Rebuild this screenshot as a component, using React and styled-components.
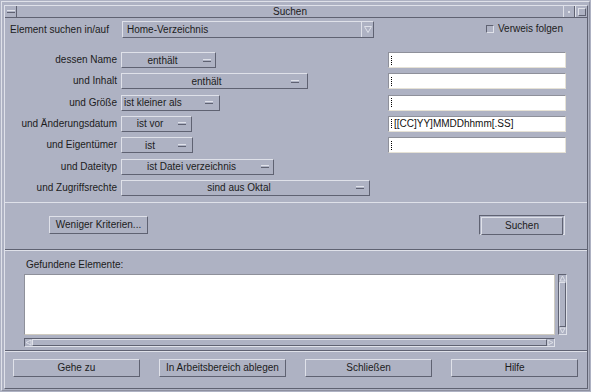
import React from 'react';
import styled, { createGlobalStyle } from 'styled-components';

const BG = '#aeb2c3';
const LIGHT = '#dfe1e9';
const DARK = '#5f6272';

const GlobalStyle = createGlobalStyle`
    body {
        margin: 0;
        overflow: hidden;
        background: ${BG};
        font-family: "Liberation Sans", Arial, sans-serif;
        font-size: 10px;
        color: #1c1c1c;
    }
`;

const Outer = styled.div`
    width: 591px;
    height: 392px;
    box-sizing: border-box;
    padding: 1px;
    background: ${BG};
`;

const Frame = styled.div`
    height: 100%;
    box-sizing: border-box;
    border-top: 1px solid ${LIGHT};
    border-left: 1px solid ${LIGHT};
    border-right: 1px solid #8d90a0;
    border-bottom: 1px solid #8d90a0;
    padding: 3px 1px 1px 2px;
`;

const Win = styled.div`
    height: 100%;
    box-sizing: border-box;
    border-top: 1px solid ${LIGHT};
    border-left: 1px solid ${LIGHT};
    border-right: 1px solid ${DARK};
    border-bottom: 1px solid ${DARK};
    display: flex;
    flex-direction: column;
`;

const TitleBar = styled.div`
    display: flex;
    height: 11px;
    border-bottom: 1px solid ${DARK};
`;

const MenuButton = styled.div`
    width: 11px;
    border-right: 1px solid ${DARK};
    display: flex;
    align-items: center;
    justify-content: center;
    &::after {
        content: '';
        width: 8px;
        height: 1px;
        border-top: 1px solid ${LIGHT};
        border-bottom: 1px solid ${DARK};
    }
`;

const Title = styled.div`
    flex: 1;
    text-align: center;
    line-height: 11px;
`;

const MinButton = styled.div`
    width: 10px;
    border-left: 1px solid ${LIGHT};
    border-right: 1px solid ${DARK};
    display: flex;
    align-items: center;
    justify-content: center;
    &::after {
        content: '';
        width: 2px;
        height: 2px;
        background: ${LIGHT};
    }
`;

const MaxButton = styled.div`
    width: 11px;
    border-left: 1px solid ${LIGHT};
    display: flex;
    align-items: center;
    justify-content: center;
    &::after {
        content: '';
        width: 6px;
        height: 6px;
        border: 1px solid ${LIGHT};
        border-right-color: ${DARK};
        border-bottom-color: ${DARK};
    }
`;

const TopRow = styled.div`
    display: flex;
    align-items: center;
    margin-top: 3px;
    padding-left: 5px;
    height: 17px;
`;

const TopLabel = styled.div`
    width: 112px;
`;

const Combo = styled.div`
    width: 252px;
    height: 17px;
    box-sizing: border-box;
    display: flex;
    border-top: 1px solid ${LIGHT};
    border-left: 1px solid ${LIGHT};
    border-bottom: 1px solid ${DARK};
    border-right: 1px solid ${DARK};
`;

const ComboText = styled.div`
    flex: 1;
    padding-left: 4px;
    line-height: 15px;
`;

const ComboArrow = styled.div`
    width: 11px;
    border-left: 1px solid ${LIGHT};
    display: flex;
    align-items: center;
    justify-content: center;
`;

const CheckWrap = styled.div`
    margin-left: auto;
    margin-right: 24px;
    display: flex;
    align-items: center;
    gap: 4px;
    align-self: flex-start;
    margin-top: 2px;
`;

const CheckBox = styled.div`
    width: 6px;
    height: 6px;
    border-top: 1px solid ${DARK};
    border-left: 1px solid ${DARK};
    border-right: 1px solid ${LIGHT};
    border-bottom: 1px solid ${LIGHT};
`;

const Criteria = styled.div`
    display: grid;
    grid-template-columns: 112px 263px 178px;
    grid-auto-rows: 16px;
    column-gap: 4px;
    row-gap: 5.33px;
    margin-top: 14px;
`;

const CritLabel = styled.div`
    text-align: right;
    line-height: 16px;
    grid-column: 1;
`;

const OptionMenu = styled.div`
    grid-column: 2;
    width: ${p => p.$w}px;
    box-sizing: border-box;
    display: flex;
    align-items: center;
    border-top: 1px solid ${LIGHT};
    border-left: 1px solid ${LIGHT};
    border-bottom: 1px solid ${DARK};
    border-right: 1px solid ${DARK};
    padding-right: ${p => p.$pad}px;
`;

const OptionText = styled.div`
    flex: 1;
    text-align: ${p => p.$align || 'center'};
    padding-left: ${p => p.$left || 0}px;
`;

const Indicator = styled.div`
    width: 8px;
    height: 1px;
    border-top: 1px solid ${LIGHT};
    border-bottom: 1px solid ${DARK};
`;

const TextField = styled.div`
    grid-column: 3;
    background: #fff;
    box-sizing: border-box;
    border-top: 1px solid #8e909a;
    border-left: 1px solid #8e909a;
    border-bottom: 1px solid #e6e2d6;
    border-right: 1px solid #e6e2d6;
    padding-left: 2px;
    display: flex;
    align-items: center;
    color: #111;
`;

const Caret = styled.span`
    display: inline-block;
    width: 0;
    height: 9px;
    border-left: 1px dotted #000;
    margin-right: 2px;
`;

const Separator = styled.div`
    margin-top: ${p => p.$top}px;
    height: 0;
    border-top: 1px solid ${p => (p.$dark ? DARK : LIGHT)};
    border-bottom: ${p => (p.$dark ? `1px solid ${LIGHT}` : 'none')};
`;

const ActionRow = styled.div`
    display: flex;
    align-items: center;
    justify-content: space-between;
    margin-top: 12px;
    height: 20px;
    padding: 0 22px 0 44px;
`;

const Button = styled.div`
    box-sizing: border-box;
    width: ${p => (p.$w ? `${p.$w}px` : 'auto')};
    height: 18px;
    line-height: 16px;
    text-align: center;
    border-top: 1px solid ${LIGHT};
    border-left: 1px solid ${LIGHT};
    border-bottom: 1px solid ${DARK};
    border-right: 1px solid ${DARK};
    white-space: nowrap;
    overflow: hidden;
`;

const DefaultRing = styled.div`
    box-sizing: border-box;
    width: 86px;
    height: 20px;
    padding: 1px;
    border-top: 1px solid ${DARK};
    border-left: 1px solid ${DARK};
    border-bottom: 1px solid ${LIGHT};
    border-right: 1px solid ${LIGHT};
`;

const Results = styled.div`
    padding-left: 19px;
    margin-top: 8px;
`;

const ResultsLabel = styled.div`
    height: 12px;
    line-height: 12px;
    padding-left: 2px;
`;

const ListArea = styled.div`
    display: flex;
    gap: 3px;
    margin-top: 3px;
`;

const ListColumn = styled.div`
    width: 531px;
    display: flex;
    flex-direction: column;
    gap: 3px;
`;

const ListBox = styled.div`
    height: 61px;
    box-sizing: border-box;
    background: #fff;
    border-top: 1px solid #8e909a;
    border-left: 1px solid #8e909a;
    border-bottom: 1px solid #cfcbc0;
    border-right: 1px solid #cfcbc0;
`;

const Scroll = styled.div`
    box-sizing: border-box;
    display: flex;
    flex-direction: ${p => (p.$vertical ? 'column' : 'row')};
    width: ${p => (p.$vertical ? '9px' : '100%')};
    height: ${p => (p.$vertical ? '61px' : '9px')};
    border-top: 1px solid ${DARK};
    border-left: 1px solid ${DARK};
    border-bottom: 1px solid ${LIGHT};
    border-right: 1px solid ${LIGHT};
`;

const ScrollArrow = styled.div`
    width: 7px;
    height: 7px;
    display: flex;
    align-items: center;
    justify-content: center;
`;

const ScrollThumb = styled.div`
    flex: 1;
    box-sizing: border-box;
    border-top: 1px solid ${LIGHT};
    border-left: 1px solid ${LIGHT};
    border-bottom: 1px solid ${DARK};
    border-right: 1px solid ${DARK};
`;

const BottomRow = styled.div`
    display: grid;
    grid-template-columns: repeat(4, 1fr);
    column-gap: 19.5px;
    margin-top: 7px;
    padding: 0 9px 0 8px;
`;

const Arrow = ({ dir }) => {
    const pts = {
        up: '3.5,1 6,6 1,6',
        down: '1,1 6,1 3.5,6',
        left: '1,3.5 6,1 6,6',
        right: '1,1 6,3.5 1,6',
    }[dir];
    return (
        <svg width="7" height="7" viewBox="0 0 7 7">
            <polygon points={pts} fill="none" stroke={LIGHT} strokeWidth="1" />
        </svg>
    );
};

const rows = [
    { label: 'dessen Name', menu: 'enthält', w: 95, pad: 4, field: true },
    { label: 'und Inhalt', menu: 'enthält', w: 187, pad: 8, field: true },
    { label: 'und Größe', menu: 'ist kleiner als', w: 99, pad: 6, field: true, align: 'left', left: 2 },
    { label: 'und Änderungsdatum', menu: 'ist vor', w: 71, pad: 5, field: true, value: '[[CC]YY]MMDDhhmm[.SS]' },
    { label: 'und Eigentümer', menu: 'ist', w: 72, pad: 6, field: true },
    { label: 'und Dateityp', menu: 'ist Datei verzeichnis', w: 153, pad: 4 },
    { label: 'und Zugriffsrechte', menu: 'sind aus Oktal', w: 249, pad: 5 },
];

const App = () => (
    <>
        <GlobalStyle />
        <Outer>
            <Frame>
                <Win>
                    <TitleBar>
                        <MenuButton />
                        <Title>Suchen</Title>
                        <MinButton />
                        <MaxButton />
                    </TitleBar>

                    <TopRow>
                        <TopLabel>Element suchen in/auf</TopLabel>
                        <Combo>
                            <ComboText>Home-Verzeichnis</ComboText>
                            <ComboArrow>
                                <svg width="8" height="7" viewBox="0 0 8 7">
                                    <polygon points="0.5,0.5 7.5,0.5 4,6.5" fill="none" stroke={LIGHT} />
                                </svg>
                            </ComboArrow>
                        </Combo>
                        <CheckWrap>
                            <CheckBox />
                            <span>Verweis folgen</span>
                        </CheckWrap>
                    </TopRow>

                    <Criteria>
                        {rows.map((r, i) => (
                            <React.Fragment key={r.label}>
                                <CritLabel style={{ gridRow: i + 1 }}>{r.label}</CritLabel>
                                <OptionMenu $w={r.w} $pad={r.pad} style={{ gridRow: i + 1 }}>
                                    <OptionText $align={r.align} $left={r.left}>{r.menu}</OptionText>
                                    <Indicator />
                                </OptionMenu>
                                {r.field && (
                                    <TextField style={{ gridRow: i + 1 }}>
                                        <Caret />
                                        {r.value}
                                    </TextField>
                                )}
                            </React.Fragment>
                        ))}
                    </Criteria>

                    <Separator $top={6} />

                    <ActionRow>
                        <Button $w={99}>Weniger Kriterien...</Button>
                        <DefaultRing>
                            <Button>Suchen</Button>
                        </DefaultRing>
                    </ActionRow>

                    <Separator $top={14} $dark />

                    <Results>
                        <ResultsLabel>Gefundene Elemente:</ResultsLabel>
                        <ListArea>
                            <ListColumn>
                                <ListBox />
                                <Scroll>
                                    <ScrollArrow><Arrow dir="left" /></ScrollArrow>
                                    <ScrollThumb />
                                    <ScrollArrow><Arrow dir="right" /></ScrollArrow>
                                </Scroll>
                            </ListColumn>
                            <Scroll $vertical>
                                <ScrollArrow><Arrow dir="up" /></ScrollArrow>
                                <ScrollThumb />
                                <ScrollArrow><Arrow dir="down" /></ScrollArrow>
                            </Scroll>
                        </ListArea>
                    </Results>

                    <Separator $top={3} $dark />

                    <BottomRow>
                        <Button>Gehe zu</Button>
                        <Button>In Arbeitsbereich ablegen</Button>
                        <Button>Schließen</Button>
                        <Button>Hilfe</Button>
                    </BottomRow>
                </Win>
            </Frame>
        </Outer>
    </>
);

export default App;
